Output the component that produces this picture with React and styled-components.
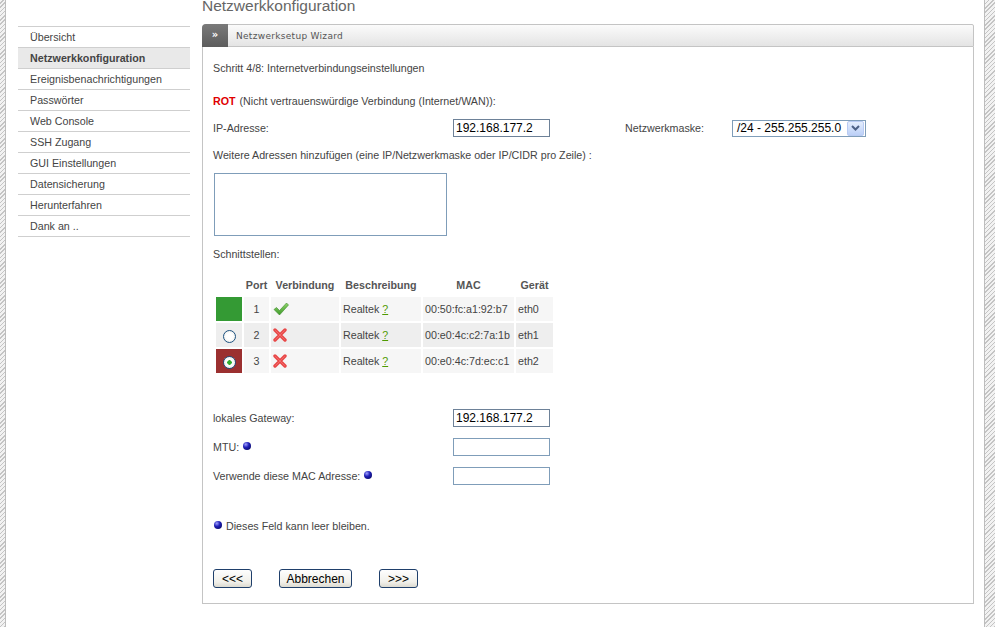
import React from "react";
import styled, { createGlobalStyle } from "styled-components";

const GlobalStyle = createGlobalStyle`
  html, body, #root {
    margin: 0;
    height: 100%;
  }
  body {
    background: #fff;
    font-family: "Liberation Sans", Arial, sans-serif;
    font-size: 10.7px;
    color: #444;
    overflow: hidden;
  }
`;

const menuItems = [
  "Übersicht",
  "Netzwerkkonfiguration",
  "Ereignisbenachrichtigungen",
  "Passwörter",
  "Web Console",
  "SSH Zugang",
  "GUI Einstellungen",
  "Datensicherung",
  "Herunterfahren",
  "Dank an ..",
];

const ports = [
  { port: 1, ok: true, mac: "00:50:fc:a1:92:b7", dev: "eth0", mark: "green" },
  { port: 2, ok: false, mac: "00:e0:4c:c2:7a:1b", dev: "eth1", mark: "radio" },
  { port: 3, ok: false, mac: "00:e0:4c:7d:ec:c1", dev: "eth2", mark: "checked" },
];

const CheckIcon = () => (
  <svg width="16" height="14" viewBox="0 0 16 14">
    <defs>
      <linearGradient id="chk" x1="0" y1="0" x2="0" y2="1">
        <stop offset="0" stopColor="#8fd46a" />
        <stop offset="1" stopColor="#3e9a2a" />
      </linearGradient>
    </defs>
    <path
      d="M1 7.5 L3.5 5.5 L6.5 8.5 L13.5 1 L15.5 3 L6.5 13 Z"
      fill="url(#chk)"
      stroke="#3b8a2a"
      strokeWidth="0.6"
      strokeLinejoin="round"
    />
  </svg>
);

const CrossIcon = () => (
  <svg width="14" height="14" viewBox="0 0 14 14">
    <path
      d="M2 2 L12 12 M12 2 L2 12"
      stroke="#e84848"
      strokeWidth="3.4"
      strokeLinecap="round"
    />
    <path
      d="M2.5 2.5 L11.5 11.5 M11.5 2.5 L2.5 11.5"
      stroke="#f77a7a"
      strokeWidth="1"
      strokeLinecap="round"
      opacity="0.7"
    />
  </svg>
);

const Chevron = () => (
  <svg width="9" height="6" viewBox="0 0 9 6">
    <path d="M1 1 L4.5 4.5 L8 1" fill="none" stroke="#4d6185" strokeWidth="2" />
  </svg>
);

export default function App() {
  return (
    <>
      <GlobalStyle />
      <Page>
        <Strip />
        <Main>
          <Sidebar>
            {menuItems.map((item, i) => (
              <MenuItem key={item} $active={i === 1}>
                {item}
              </MenuItem>
            ))}
          </Sidebar>
          <Content>
            <Title>Netzwerkkonfiguration</Title>
            <Panel>
              <PanelHead>
                <HeadTab>»</HeadTab>
                <HeadTitle>Netzwerksetup Wizard</HeadTitle>
              </PanelHead>
              <PanelBody>
                <Line $mt={14}>Schritt 4/8: Internetverbindungseinstellungen</Line>
                <Line $mt={19}>
                  <Red>ROT</Red> (Nicht vertrauenswürdige Verbindung (Internet/WAN)):
                </Line>
                <FormRow $mt={11}>
                  <Label>IP-Adresse:</Label>
                  <TextInput defaultValue="192.168.177.2" $filled />
                  <MaskLabel>Netzwerkmaske:</MaskLabel>
                  <Select>
                    <span>/24 - 255.255.255.0</span>
                    <SelectBtn>
                      <Chevron />
                    </SelectBtn>
                  </Select>
                </FormRow>
                <Line $mt={11}>
                  Weitere Adressen hinzufügen (eine IP/Netzwerkmaske oder IP/CIDR pro Zeile) :
                </Line>
                <TextArea />
                <Line $mt={11}>Schnittstellen:</Line>
                <PortTable>
                  <thead>
                    <tr>
                      <Th $w={26}></Th>
                      <Th $w={25}>Port</Th>
                      <Th $w={68}>Verbindung</Th>
                      <Th $w={80}>Beschreibung</Th>
                      <Th $w={91}>MAC</Th>
                      <Th $w={37}>Gerät</Th>
                    </tr>
                  </thead>
                  <tbody>
                    {ports.map((p, i) => (
                      <tr key={p.port}>
                        <MarkCell $mark={p.mark} $alt={i === 1}>
                          {p.mark !== "green" && <Radio $checked={p.mark === "checked"} />}
                        </MarkCell>
                        <Td $alt={i === 1} $center>
                          {p.port}
                        </Td>
                        <Td $alt={i === 1}>
                          <IconWrap>{p.ok ? <CheckIcon /> : <CrossIcon />}</IconWrap>
                        </Td>
                        <Td $alt={i === 1}>
                          Realtek <HelpLink href="#">?</HelpLink>
                        </Td>
                        <Td $alt={i === 1}>{p.mac}</Td>
                        <Td $alt={i === 1}>{p.dev}</Td>
                      </tr>
                    ))}
                  </tbody>
                </PortTable>
                <FormRow $mt={34}>
                  <Label>lokales Gateway:</Label>
                  <TextInput defaultValue="192.168.177.2" $filled />
                </FormRow>
                <FormRow $mt={11}>
                  <Label>
                    MTU: <Bullet />
                  </Label>
                  <TextInput />
                </FormRow>
                <FormRow $mt={11}>
                  <Label>
                    Verwende diese MAC Adresse: <Bullet />
                  </Label>
                  <TextInput />
                </FormRow>
                <Line $mt={34}>
                  <Bullet $left /> Dieses Feld kann leer bleiben.
                </Line>
                <Buttons>
                  <Button $w={39}>&lt;&lt;&lt;</Button>
                  <Button $w={73}>Abbrechen</Button>
                  <Button $w={39}>&gt;&gt;&gt;</Button>
                </Buttons>
              </PanelBody>
            </Panel>
          </Content>
        </Main>
        <Strip $right />
      </Page>
    </>
  );
}

const Page = styled.div`
  display: flex;
  height: 100%;
`;

const Strip = styled.div`
  flex: 0 0 ${(p) => (p.$right ? "10px" : "5px")};
  background: repeating-linear-gradient(
    -45deg,
    #c4c4c4 0 1px,
    #f2f2f2 1px 3px
  );
  ${(p) => (p.$right ? "border-left: 1px solid #bdbdbd;" : "border-right: 1px solid #bdbdbd;")}
`;

const Main = styled.div`
  flex: 1;
  display: flex;
  gap: 12px;
  padding: 0 10px 0 12px;
`;

const Sidebar = styled.nav`
  width: 172px;
  padding-top: 26px;
  display: flex;
  flex-direction: column;
  & > div:first-child {
    border-top: 1px solid #cfcfcf;
  }
`;

const MenuItem = styled.div`
  height: 20px;
  line-height: 20px;
  padding-left: 12px;
  border-bottom: 1px solid #cfcfcf;
  color: #444;
  background: ${(p) => (p.$active ? "#e9e9e9" : "transparent")};
  font-weight: ${(p) => (p.$active ? "bold" : "normal")};
`;

const Content = styled.div`
  flex: 1;
  display: flex;
  flex-direction: column;
`;

const Title = styled.h1`
  margin: -3px 0 0;
  height: 27px;
  font-size: 15.5px;
  line-height: 18px;
  font-weight: normal;
  color: #666;
`;

const Panel = styled.section`
  display: flex;
  flex-direction: column;
`;

const PanelHead = styled.div`
  height: 21px;
  display: flex;
  align-items: center;
  border: 1px solid #c4c4c4;
  border-radius: 4px 2px 0 0;
  background: linear-gradient(#fbfbfb, #e4e4e4);
`;

const HeadTab = styled.div`
  width: 26px;
  height: 23px;
  margin: -1px 0 -1px -1px;
  border-radius: 4px 0 0 0;
  background: linear-gradient(#7a7a7a, #5c5c5c);
  color: #fff;
  font-family: "DejaVu Sans", Verdana, sans-serif;
  font-weight: bold;
  font-size: 10px;
  line-height: 22px;
  text-align: center;
`;

const HeadTitle = styled.span`
  margin-left: 8px;
  font-family: "DejaVu Sans", Verdana, sans-serif;
  font-size: 9px;
  letter-spacing: 0.3px;
  color: #555;
`;

const PanelBody = styled.div`
  display: flex;
  flex-direction: column;
  align-items: flex-start;
  padding: 0 10px 15px;
  border: 1px solid #c4c4c4;
  border-top: none;
`;

const Line = styled.div`
  margin-top: ${(p) => p.$mt || 0}px;
  line-height: 14px;
  color: #444;
  display: flex;
  align-items: center;
`;

const Red = styled.b`
  color: #e00000;
  margin-right: 4px;
`;

const FormRow = styled.div`
  margin-top: ${(p) => p.$mt || 0}px;
  display: flex;
  align-items: center;
  height: 18px;
`;

const Label = styled.span`
  width: 240px;
  color: #444;
  display: flex;
  align-items: center;
  gap: 4px;
`;

const MaskLabel = styled.span`
  margin-left: 75px;
  width: 107px;
  color: #444;
`;

const TextInput = styled.input`
  box-sizing: border-box;
  width: 97px;
  height: 18px;
  padding: 0 2px;
  border: 1px solid ${(p) => (p.$filled ? "#6d8198" : "#7f9db9")};
  font-family: "Liberation Sans", Arial, sans-serif;
  font-size: 12px;
  color: #000;
  outline: none;
`;

const Select = styled.div`
  box-sizing: border-box;
  width: 134px;
  height: 17px;
  border: 1px solid #7f9db9;
  display: flex;
  align-items: center;
  justify-content: space-between;
  padding: 0 1px 0 4px;
  font-size: 12px;
  color: #000;
`;

const SelectBtn = styled.span`
  width: 15px;
  height: 13px;
  border: 1px solid #b9cbf3;
  border-radius: 2px;
  background: linear-gradient(#e4edfd, #bcd0f7);
  display: flex;
  align-items: center;
  justify-content: center;
`;

const TextArea = styled.textarea`
  box-sizing: border-box;
  margin: 11px 0 0 1px;
  width: 233px;
  height: 63px;
  border: 1px solid #7f9db9;
  resize: none;
  outline: none;
`;

const PortTable = styled.table`
  margin: 12px 0 0 1px;
  border-collapse: separate;
  border-spacing: 2px;
  table-layout: fixed;
  color: #444;
`;

const Th = styled.th`
  width: ${(p) => p.$w}px;
  height: 20px;
  padding: 0;
  font-weight: bold;
  text-align: center;
  white-space: nowrap;
  color: #555;
`;

const Td = styled.td`
  height: 24px;
  padding: 0 2px;
  white-space: nowrap;
  overflow: hidden;
  background: ${(p) => (p.$alt ? "#eeeeee" : "#f6f6f6")};
  text-align: ${(p) => (p.$center ? "center" : "left")};
`;

const MarkCell = styled.td`
  height: 24px;
  padding: 0;
  text-align: center;
  background: ${(p) =>
    p.$mark === "green" ? "#349a34" : p.$mark === "checked" ? "#9b3030" : p.$alt ? "#eeeeee" : "#f6f6f6"};
`;

const Radio = styled.span`
  display: inline-block;
  vertical-align: middle;
  box-sizing: border-box;
  width: 13px;
  height: 13px;
  margin-top: 3px;
  border-radius: 50%;
  border: 1px solid #1d5281;
  background: ${(p) =>
    p.$checked
      ? "radial-gradient(circle, #2fae2f 0 2px, #fff 2.5px, #e6e6e0 100%)"
      : "radial-gradient(circle, #fff 40%, #e6e6e0 100%)"};
`;

const IconWrap = styled.span`
  display: inline-flex;
  vertical-align: middle;
`;

const HelpLink = styled.a`
  color: #4f9a00;
  text-decoration: underline;
`;

const Bullet = styled.span`
  display: inline-block;
  width: 8px;
  height: 8px;
  border-radius: 50%;
  margin: ${(p) => (p.$left ? "-3px 4px 0 1px" : "-3px 0 0 0")};
  background: radial-gradient(circle at 35% 30%, #a0a0ff 0, #2020b8 40%, #00004a 100%);
`;

const Buttons = styled.div`
  margin-top: 36px;
  display: flex;
  gap: 27px;
`;

const Button = styled.button`
  box-sizing: border-box;
  width: ${(p) => p.$w}px;
  height: 19px;
  padding: 0;
  border: 1px solid #1f3f6b;
  border-radius: 3px;
  background: linear-gradient(#fefefe, #f1f0ea 70%, #dcdad0);
  font-family: "Liberation Sans", Arial, sans-serif;
  font-size: 12px;
  color: #000;
`;
